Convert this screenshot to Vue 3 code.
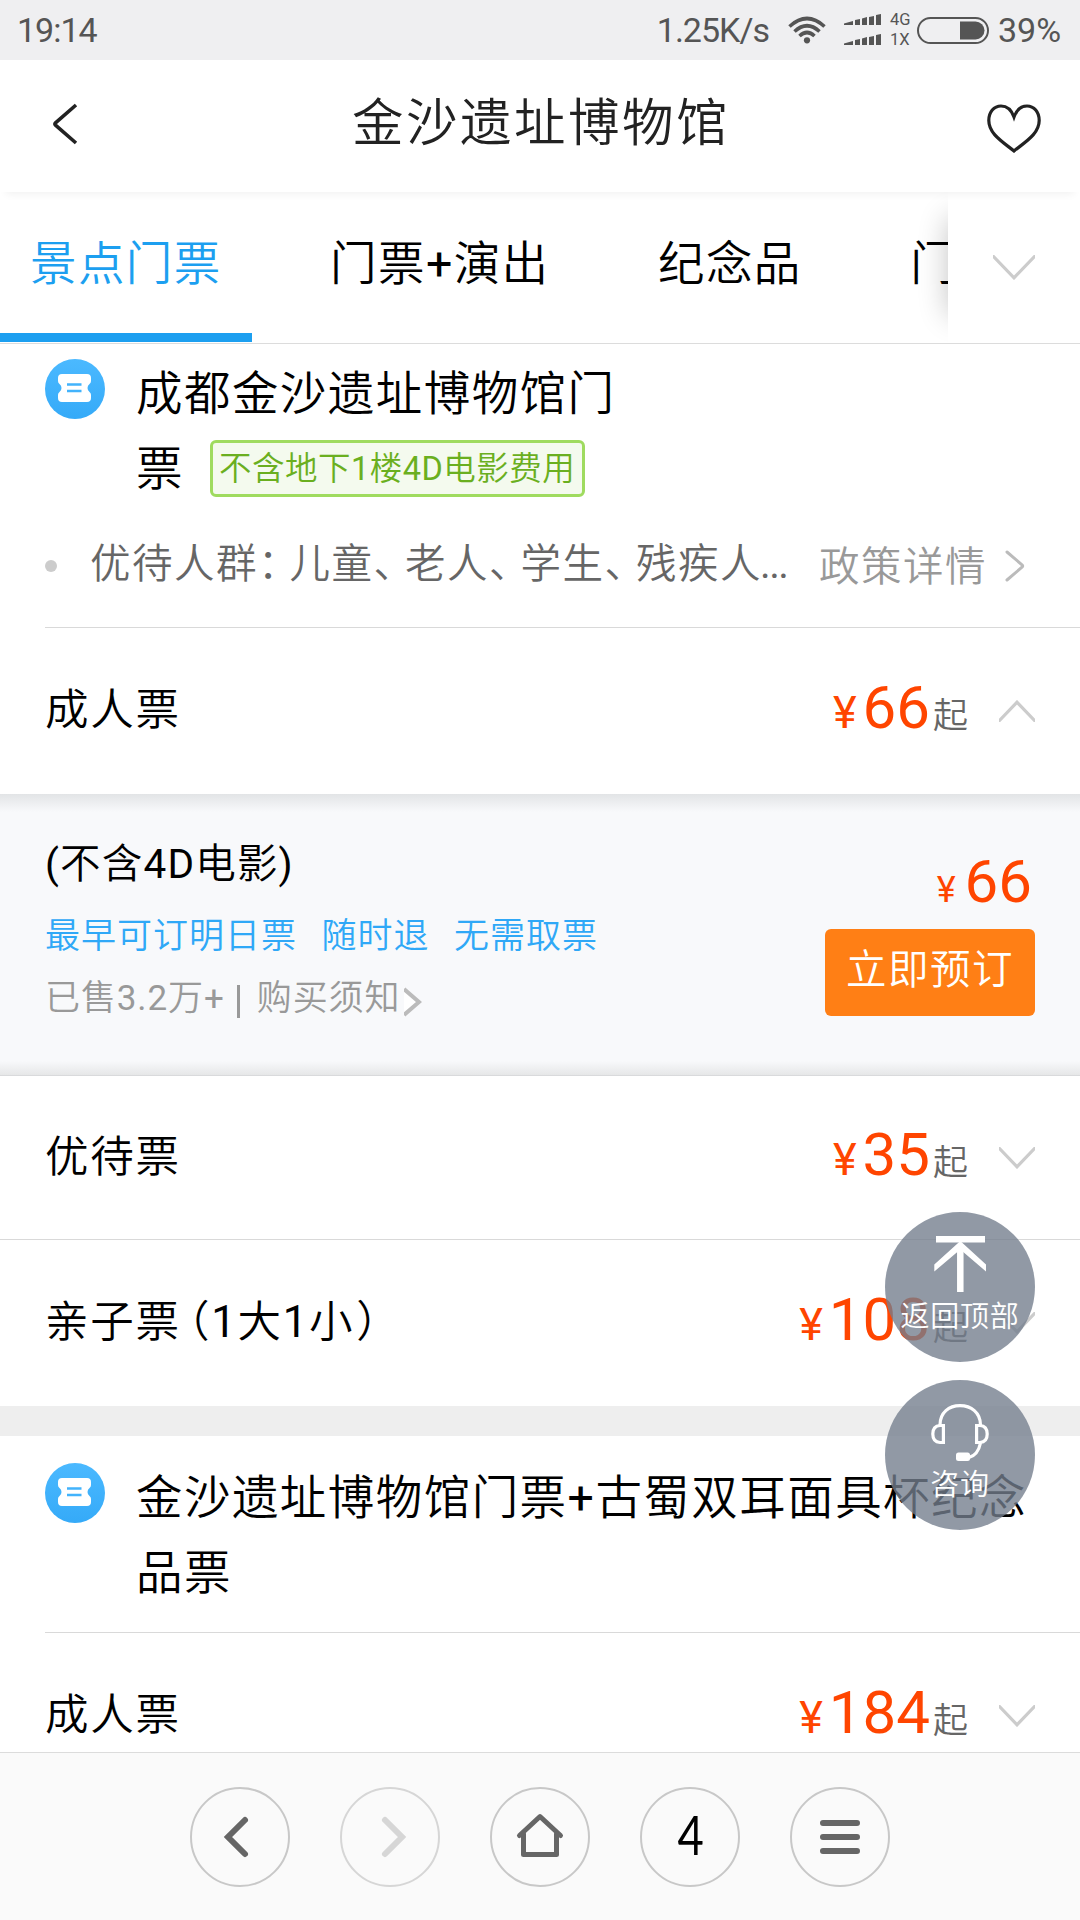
<script setup>
import { h } from 'vue'

const tabs = ['景点门票', '门票+演出', '纪念品', '门票+讲解']
const activeTab = 0

const Chevron = (props) =>
  h('svg', { width: props.w, height: props.h, viewBox: `0 0 ${props.w} ${props.h}`, fill: 'none', stroke: '#ccc', 'stroke-width': 3.2 }, [
    h('path', {
      d: props.up
        ? `M-1 ${props.h} L${props.w / 2} 2.2 L${props.w + 1} ${props.h}`
        : `M-1 0 L${props.w / 2} ${props.h - 2.2} L${props.w + 1} 0`,
    }),
  ])
Chevron.props = ['w', 'h', 'up']

const TicketIcon = () =>
  h('svg', { width: 60, height: 60, viewBox: '0 0 60 60' }, [
    h('defs', [
      h('linearGradient', { id: 'ticketFill', x1: 0, y1: 0, x2: 0, y2: 1 }, [
        h('stop', { offset: '0', 'stop-color': '#4bb9ff' }),
        h('stop', { offset: '1', 'stop-color': '#35aaf8' }),
      ]),
    ]),
    h('circle', { cx: 30, cy: 30, r: 30, fill: 'url(#ticketFill)' }),
    h('path', {
      fill: '#fff',
      d: 'M17 15H42Q46 15 46 19V22Q46 24 44.5 25Q42.5 26.5 42.5 29Q42.5 31.500 44.5 33Q46 34 46 36V39Q46 43 42 43H17Q13 43 13 39V36Q13 34 14.500 33Q16.500 31.500 16.500 29Q16.500 26.500 14.500 25Q13 24 13 22V19Q13 15 17 15Z',
    }),
    h('path', { stroke: '#42b3fc', 'stroke-width': 2.4, d: 'M22 25.500H36.500M22 32H36.500' }),
  ])

const navs = ['back', 'forward', 'home', 'windows', 'menu']
</script>

<template>
  <div class="screen">
    <div class="status">
      <span class="clock">19:14</span>
      <span class="speed">1.25K/s</span>
      <svg class="wifi" width="38" height="28" viewBox="0 0 38 28" fill="none" stroke="#555" stroke-width="3.6">
        <path d="M1.500 10.500Q19 -5.500 36.500 10.500" />
        <path d="M6.500 15.500Q19 4 31.500 15.500" />
        <path d="M11.500 20Q19 13 26.500 20" />
        <circle cx="19" cy="24.300" r="3.100" fill="#555" stroke="none" />
      </svg>
      <svg class="signal" width="37" height="32" viewBox="0 0 37 32" fill="#555">
        <g v-for="y in [0, 20]" :key="y" :transform="`translate(0 ${y})`">
          <path d="M0 11V9.500L9 7V11ZM11 11V6L16 5V11ZM18 11V4.500L23 3V11ZM25 11V3L30 2V11ZM32 11V1L37 0V11Z" />
        </g>
      </svg>
      <span class="net"><i>4G</i><i>1X</i></span>
      <svg class="battery" width="72" height="27" viewBox="0 0 72 27">
        <rect x="1" y="1" width="70" height="25" rx="12.500" fill="none" stroke="#555" stroke-width="2" />
        <path d="M43 4.500H58.500A9 9 0 0 1 58.500 22.500H43Z" fill="#555" />
      </svg>
      <span class="pct">39%</span>
    </div>

    <header class="header">
      <svg class="back" width="26" height="42" viewBox="0 0 26 42" fill="none" stroke="#222" stroke-width="3.600">
        <path d="M24 2L3.500 19.800Q2.200 21 3.500 22.200L24 40" />
      </svg>
      <h1>金沙遗址博物馆</h1>
      <svg class="heart" width="54" height="49" viewBox="0 0 54 49" fill="none" stroke="#222" stroke-width="3.200">
        <path d="M27 13Q23 2 14 2C7 2 1.800 8 1.800 16.500C1.800 30 16 38 27 47C38 38 52.200 30 52.200 16.500C52.200 8 47 2 40 2Q31 2 27 13Z" />
      </svg>
    </header>

    <nav class="tabs">
      <div class="tab-strip">
        <span v-for="(t, i) in tabs" :key="i" class="tab" :class="{ active: i === activeTab }">{{ t }}</span>
      </div>
      <div class="tab-more"><Chevron :w="42" :h="25" /></div>
    </nav>

    <main class="list">
      <section class="product">
        <div class="product-head first">
          <TicketIcon class="ticket" />
          <div class="product-name">
            <div class="line">成都金沙遗址博物馆门</div>
            <div class="line">票<span class="tag">不含地下1楼4D电影费用</span></div>
          </div>
        </div>
        <div class="policy">
          <span class="dot"></span>
          <span class="policy-text">优待人群<b class="colon">：</b>儿童<b>、</b>老人<b>、</b>学生<b>、</b>残疾人<em>...</em></span>
          <span class="policy-link">政策详情</span>
          <svg width="20" height="32" viewBox="0 0 20 32" fill="none" stroke="#bbb" stroke-width="3" stroke-linecap="round">
            <path d="M2 2L17 14.800Q18.400 16 17 17.200L2 30" />
          </svg>
        </div>
      </section>

      <div class="row inset">
        <span class="kind">成人票</span>
        <span class="price"><i>¥</i>66<u>起</u></span>
        <Chevron :w="36" :h="22" :up="true" />
      </div>

      <div class="offer">
        <div class="offer-info">
          <div class="offer-name">(不含4D电影)</div>
          <div class="perks"><span>最早可订明日票</span><span>随时退</span><span>无需取票</span></div>
          <div class="sold">
            <span>已售3.2万+</span><span class="bar"></span><span>购买须知</span>
            <svg width="18" height="30" viewBox="0 0 18 30">
              <path d="M0 0L16 15L0 30Z" fill="#fff" />
              <path d="M0 2L15 15L0 28" fill="none" stroke="#bbb" stroke-width="4" />
            </svg>
          </div>
        </div>
        <div class="offer-buy">
          <div class="offer-price"><i>¥</i>66</div>
          <button>立即预订</button>
        </div>
      </div>

      <div class="row short">
        <span class="kind">优待票</span>
        <span class="price"><i>¥</i>35<u>起</u></span>
        <Chevron :w="36" :h="22" />
      </div>
      <div class="row full">
        <span class="kind">亲子票<b class="open">（</b>1大1小<b class="close">）</b></span>
        <span class="price"><i>¥</i>108<u>起</u></span>
        <Chevron :w="36" :h="22" />
      </div>

      <div class="gap"></div>

      <section class="product">
        <div class="product-head second">
          <TicketIcon class="ticket" />
          <div class="product-name">
            <div class="line">金沙遗址博物馆门票+古蜀双耳面具杯纪念</div>
            <div class="line">品票</div>
          </div>
        </div>
      </section>
      <div class="row inset">
        <span class="kind">成人票</span>
        <span class="price"><i>¥</i>184<u>起</u></span>
        <Chevron :w="36" :h="22" />
      </div>
    </main>

    <footer class="toolbar">
      <div v-for="n in navs" :key="n" class="nav" :class="`nav-${n}`">
        <span v-if="n === 'windows'">4</span>
        <svg v-else width="100" height="100" viewBox="0 0 100 100" fill="none" stroke="#666" stroke-width="6">
          <path v-if="n === 'back'" stroke-linecap="round" d="M55 33L38 50L55 67" />
          <path v-if="n === 'forward'" stroke="#d6d6d6" stroke-linecap="round" d="M45 33L62 50L45 67" />
          <g v-if="n === 'home'" stroke-width="5" stroke-linecap="round" stroke-linejoin="round">
            <path d="M29.500 48.500L50 29.500L70.500 48.500" />
            <path d="M33.500 47V67.500H66.500V47" />
          </g>
          <path v-if="n === 'menu'" stroke-linecap="round" d="M33 36H67M33 50H67M33 64H67" />
        </svg>
      </div>
    </footer>

    <div class="fabs">
      <div class="fab">
        <svg width="60" height="60" viewBox="0 0 60 60" fill="none" stroke="#fff" stroke-width="6.500">
          <path d="M6 5.200H55M30.300 13V58" />
          <path d="M4.300 37.500V30.500L30.300 7L56 30.500V37.500L30.300 15.500Z" fill="#fff" stroke="none" />
        </svg>
        <span>返回顶部</span>
      </div>
      <div class="fab">
        <svg width="60" height="60" viewBox="0 0 60 60" fill="none" stroke="#fff" stroke-width="3.200">
          <path d="M10 23C10 10.500 19 3.600 30 3.600S50.500 10.500 50.500 23" />
          <path d="M13.400 23.500V40.500H10Q2.800 40 2.800 32T10 23.500Z" />
          <path d="M46.600 23.500V40.500H50Q57.200 40 57.200 32T50 23.500Z" />
          <path d="M50.500 41Q48 53 39 55.500" />
          <rect x="26" y="50.500" width="14" height="8.500" rx="2.500" fill="#fff" stroke="none" />
        </svg>
        <span>咨询</span>
      </div>
    </div>
  </div>
</template>

<style>
body {
  background: #fff;
}
</style>

<style scoped>
.screen {
  position: relative;
  width: 1080px;
  height: 1920px;
  overflow: hidden;
  display: flex;
  flex-direction: column;
  background: #fff;
  color: #000;
  font-family: Roboto, 'Noto Sans CJK SC DemiLight', 'Noto Sans CJK SC', sans-serif;
  font-weight: 400;
}
svg { display: block; flex: none; }
i, em, u, b { font-style: normal; text-decoration: none; font-weight: inherit; }

.status {
  flex: none;
  height: 60px;
  display: flex;
  align-items: center;
  background: #efeff1;
  color: #555;
  font-size: 34px;
  line-height: 60px;
  letter-spacing: -1px;
}
.clock { margin-left: 17px; }
.speed { margin-left: auto; }
.wifi { margin-left: 19px; }
.signal { margin-left: 18px; }
.net { display: flex; flex-direction: column; gap: 4px; width: 27px; margin-left: 9px; font-size: 16.500px; line-height: 16.500px; letter-spacing: 0; }
.battery { margin-left: 0; }
.pct { width: 82px; margin-left: 9px; letter-spacing: 0; }

.header {
  flex: none;
  position: relative;
  z-index: 1;
  height: 132px;
  display: flex;
  align-items: center;
  justify-content: space-between;
  padding: 0 39px 0 52px;
  background: #fff;
  box-shadow: 0 8px 8px -6px rgba(0, 0, 0, 0.06);
}
.header .back { margin-top: -4px; }
.header .heart { margin-top: 5px; }
h1 { margin: -4px 0 0 17px; font-size: 51.500px; line-height: 76px; letter-spacing: 2.500px; font-weight: inherit; color: #222; }

.tabs { flex: none; height: 151px; display: flex; border-bottom: 1px solid #dcdcdc; background: #fff; }
.tab-strip { width: 948px; flex: none; display: flex; gap: 48.500px; overflow: hidden; box-sizing: border-box; }
.tab {
  flex: none;
  box-sizing: border-box;
  height: 150px;
  padding: 0 30px;
  border-bottom: 9px solid transparent;
  font-size: 46.500px;
  letter-spacing: 1.400px;
  line-height: 145px;
}
.tab.active { color: #1c9ff0; border-color: #1c9ff0; }
.tab-more {
  flex: 1;
  height: 150px;
  display: flex;
  align-items: center;
  justify-content: center;
  position: relative;
}
.tab-more::before {
  content: '';
  position: absolute;
  left: 0;
  top: 26px;
  width: 60px;
  height: 97px;
  box-shadow: 0 0 30px rgba(0, 0, 0, 0.24);
  clip-path: inset(-40px 60px -40px -40px);
}

.list { flex: 1; min-height: 0; overflow: hidden; }
.product-head { display: flex; padding-left: 45px; }
.product-head.first { padding-top: 15px; height: 159px; }
.product-head.second { padding-top: 27px; height: 169px; }
.ticket { margin-right: 31px; }
.product-name { margin-top: -2px; }
.line { display: flex; align-items: center; height: 75px; font-size: 46.500px; line-height: 75px; letter-spacing: 1.450px; white-space: nowrap; }
.tag {
  box-sizing: border-box;
  height: 57px;
  margin: -2px 0 0 26px;
  padding: 0 6px;
  width: 375px;
  border: 3px solid #9fdb5f;
  border-radius: 6px;
  background: #f4faee;
  color: #6aaf20;
  font-size: 32.500px;
  letter-spacing: 0.500px;
  line-height: 53px;
}
.policy { box-sizing: border-box; height: 109px; display: flex; align-items: center; padding: 0 0 30px 45px; font-size: 40.500px; letter-spacing: 1.500px; line-height: 60px; color: #666; }
.dot { width: 12px; height: 12px; border-radius: 50%; background: #ccc; margin: 17px 33px 0 0; }
.policy-text { width: 729px; white-space: nowrap; margin-top: 13px; }
.policy-text b { letter-spacing: -9px; }
.policy-text em { letter-spacing: -1.500px; margin-left: -2px; }
.policy-link { color: #999; margin-top: 19px; }
.policy svg { margin: 16px 0 0 18px; }

.row { display: flex; align-items: center; height: 166px; padding-right: 45px; box-sizing: border-box; }
.row.inset { margin-left: 45px; border-top: 1px solid #d9d9d9; height: 167px; }
.row.full { margin-left: 0; padding-left: 45px; border-top: 1px solid #d9d9d9; height: 167px; }
.row.short { padding-left: 45px; height: 163px; }
.kind { flex: 1; font-size: 43.500px; letter-spacing: 1.800px; line-height: 60px; }
.kind .open { margin-left: -15px; }
.kind .close { margin-left: 2px; }
.price { display: flex; align-items: baseline; color: #ff4500; font-size: 60px; line-height: 80px; margin: 3px 31px 0 0; }
.price i { font-size: 45px; margin-right: 6px; }
.price u { font-size: 35px; color: #666; margin-left: 3px; }

.offer {
  height: 282px;
  box-sizing: border-box;
  display: flex;
  justify-content: space-between;
  padding: 0 45px;
  border-bottom: 1px solid #d9dadc;
  background:
    linear-gradient(#e2e4e6, #f8f9fb00) top / 100% 18px no-repeat,
    linear-gradient(#f8f9fb00, #e6e7e8) bottom / 100% 14px no-repeat,
    #f8f9fb;
}
.offer-name { margin-top: 40px; font-size: 40.500px; letter-spacing: 1.200px; line-height: 60px; }
.perks { display: flex; gap: 24.500px; margin-top: 13px; font-size: 35px; letter-spacing: 1px; line-height: 60px; color: #2fa8f7; }
.sold { display: flex; align-items: center; margin-top: 2px; font-size: 35px; letter-spacing: 0.900px; line-height: 60px; color: #999; }
.sold .bar { width: 3px; height: 33px; background: #999; margin: 4px 17px 0 12px; }
.sold svg { margin: 6px 0 0 4px; }
.offer-buy { display: flex; flex-direction: column; align-items: flex-end; }
.offer-price { margin-top: 48px; margin-right: 3px; font-size: 60px; line-height: 80px; height: 80px; color: #ff4500; }
.offer-price i { font-size: 36px; margin-right: 9px; }
button {
  width: 210px;
  height: 87px;
  margin-top: 7px;
  padding: 0 0 6px 0;
  border: 0;
  border-radius: 6px;
  background: #ff7f15;
  color: #fff;
  font: inherit;
  font-size: 40.500px;
  line-height: 60px;
  letter-spacing: 1.500px;
}
.gap { height: 30px; background: #eee; }

.toolbar {
  flex: none;
  box-sizing: border-box;
  height: 168px;
  display: flex;
  gap: 50px;
  padding: 34px 0 0 190px;
  border-top: 1px solid #dcdcdc;
  background: #fafafa;
}
.nav { width: 100px; height: 100px; box-sizing: border-box; border: 2px solid #c8c8c8; border-radius: 50%; display: flex; align-items: center; justify-content: center; }
.nav-forward { border-color: #d6d6d6; }
.nav span { font-family: Lato, sans-serif; font-size: 54px; line-height: 96px; transform: scaleX(0.84); margin: -4px 0 0 1px; }

.fabs { position: absolute; left: 885px; top: 1212px; display: flex; flex-direction: column; gap: 18px; }
.fab {
  width: 150px;
  height: 150px;
  box-sizing: border-box;
  padding-top: 22px;
  border-radius: 50%;
  display: flex;
  flex-direction: column;
  align-items: center;
  background: rgba(116, 126, 141, 0.79);
  color: #fff;
  font-size: 29px;
  letter-spacing: 0.800px;
}
.fab span { line-height: 40px; margin-top: 3px; }
</style>
